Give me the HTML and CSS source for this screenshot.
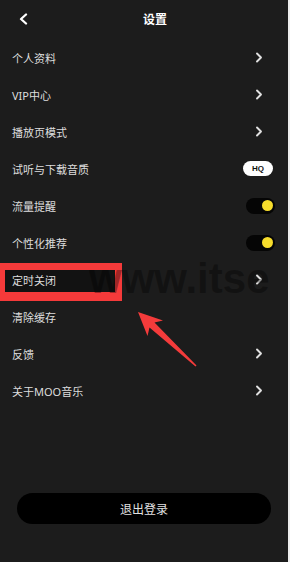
FILE: index.html
```html
<!DOCTYPE html>
<html lang="zh">
<head>
<meta charset="utf-8">
<title>设置</title>
<link rel="stylesheet" href="styles.css">
</head>
<body>
<div class="screen">
  <div class="highlight"></div>
  <header class="nav">
    <svg class="back" width="9" height="12" viewBox="0 0 9 12"><polyline points="7,1.5 2,6 7,10.5" fill="none" stroke="#fff" stroke-width="2.3" stroke-linecap="round" stroke-linejoin="round"/></svg>
    <h1 class="title">设置</h1>
    <span></span>
  </header>
  <ul class="list">
    <li class="row"><span class="label">个人资料</span><svg class="chev" width="8" height="11" viewBox="0 0 8 11"><polyline points="2,1.5 6,5.5 2,9.5" fill="none" stroke="#e0e0e0" stroke-width="1.9" stroke-linecap="round" stroke-linejoin="round"/></svg></li>
    <li class="row"><span class="label">VIP中心</span><svg class="chev" width="8" height="11" viewBox="0 0 8 11"><polyline points="2,1.5 6,5.5 2,9.5" fill="none" stroke="#e0e0e0" stroke-width="1.9" stroke-linecap="round" stroke-linejoin="round"/></svg></li>
    <li class="row"><span class="label">播放页模式</span><svg class="chev" width="8" height="11" viewBox="0 0 8 11"><polyline points="2,1.5 6,5.5 2,9.5" fill="none" stroke="#e0e0e0" stroke-width="1.9" stroke-linecap="round" stroke-linejoin="round"/></svg></li>
    <li class="row"><span class="label">试听与下载音质</span><span class="badge">HQ</span></li>
    <li class="row"><span class="label">流量提醒</span><span class="toggle"><span class="knob"></span></span></li>
    <li class="row"><span class="label">个性化推荐</span><span class="toggle"><span class="knob"></span></span></li>
    <li class="row"><span class="label">定时关闭</span><svg class="chev" width="8" height="11" viewBox="0 0 8 11"><polyline points="2,1.5 6,5.5 2,9.5" fill="none" stroke="#e0e0e0" stroke-width="1.9" stroke-linecap="round" stroke-linejoin="round"/></svg></li>
    <li class="row"><span class="label">清除缓存</span></li>
    <li class="row"><span class="label">反馈</span><svg class="chev" width="8" height="11" viewBox="0 0 8 11"><polyline points="2,1.5 6,5.5 2,9.5" fill="none" stroke="#e0e0e0" stroke-width="1.9" stroke-linecap="round" stroke-linejoin="round"/></svg></li>
    <li class="row"><span class="label">关于MOO音乐</span><svg class="chev" width="8" height="11" viewBox="0 0 8 11"><polyline points="2,1.5 6,5.5 2,9.5" fill="none" stroke="#e0e0e0" stroke-width="1.9" stroke-linecap="round" stroke-linejoin="round"/></svg></li>
  </ul>
  <div class="footer">
    <button class="logout">退出登录</button>
  </div>
  <div class="watermark"><span class="wm-url">www.itse</span></div>
  <svg class="arrow" width="288" height="562" viewBox="0 0 288 562"><polygon points="138,312 163,320.5 154.5,322.5 196.5,365.5 195.5,366.5 149.5,327.5 147.5,336" fill="#f43b3b"/></svg>
</div>
</body>
</html>
```

FILE: styles.css
```css
html, body {
  margin: 0;
  padding: 0;
}
body {
  background: #ededed;
  font-family: "Noto Sans", "Noto Sans CJK SC", sans-serif;
}
.screen {
  position: relative;
  width: 288px;
  height: 562px;
  background: #1c1c1c;
  display: flex;
  flex-direction: column;
  overflow: hidden;
}
.nav {
  position: relative;
  z-index: 1;
  height: 39px;
  display: grid;
  grid-template-columns: 40px 1fr 40px;
  align-items: center;
}
.back {
  margin-left: 19px;
  margin-top: -1px;
}
.title {
  margin: 0;
  padding-left: 22px;
  text-align: center;
  font-size: 12px;
  font-weight: 700;
  color: #fff;
  margin-top: -1px;
}
.list {
  position: relative;
  z-index: 1;
  list-style: none;
  margin: 0;
  padding: 0;
}
.row {
  height: 37px;
  display: flex;
  align-items: center;
  justify-content: space-between;
  padding: 0 13px 0 12px;
}
.label {
  font-size: 11px;
  color: #dedede;
}
.chev {
  margin-right: 12px;
}
.badge {
  width: 30px;
  height: 15px;
  margin-right: 2px;
  border-radius: 8px;
  background: #fff;
  color: #111;
  font-family: "Liberation Sans", Arial, sans-serif;
  font-weight: 700;
  font-size: 8px;
  display: flex;
  align-items: center;
  justify-content: center;
}
.toggle {
  width: 29px;
  height: 16px;
  border-radius: 8px;
  background: #050505;
  display: flex;
  align-items: center;
  justify-content: flex-end;
  padding-right: 2px;
  box-sizing: border-box;
}
.knob {
  width: 11px;
  height: 11px;
  border-radius: 50%;
  background: #f7dd2c;
}
.footer {
  margin-top: auto;
  padding: 0 17px 38px;
  position: relative;
  z-index: 1;
}
.logout {
  display: block;
  width: 100%;
  height: 31px;
  border: none;
  border-radius: 16px;
  background: #000;
  color: #e2e2e2;
  font-family: "Noto Sans CJK SC", sans-serif;
  font-size: 12px;
  padding: 0;
}
.highlight {
  position: absolute;
  left: 0;
  top: 263px;
  width: 110px;
  height: 22px;
  border-style: solid;
  border-color: #f53a3a;
  border-width: 7px 7px 9px 5px;
  background: #121212;
  z-index: 0;
}
.watermark {
  position: absolute;
  left: 89px;
  top: 257px;
  width: 199px;
  height: 44px;
  z-index: 2;
  pointer-events: none;
  overflow: hidden;
  font-family: "Liberation Sans", Arial, sans-serif;
  font-weight: 700;
  font-size: 42px;
  line-height: 44px;
  color: rgba(0, 0, 0, 0.36);
  white-space: nowrap;
}
.arrow {
  position: absolute;
  left: 0;
  top: 0;
  z-index: 3;
  pointer-events: none;
}
```
